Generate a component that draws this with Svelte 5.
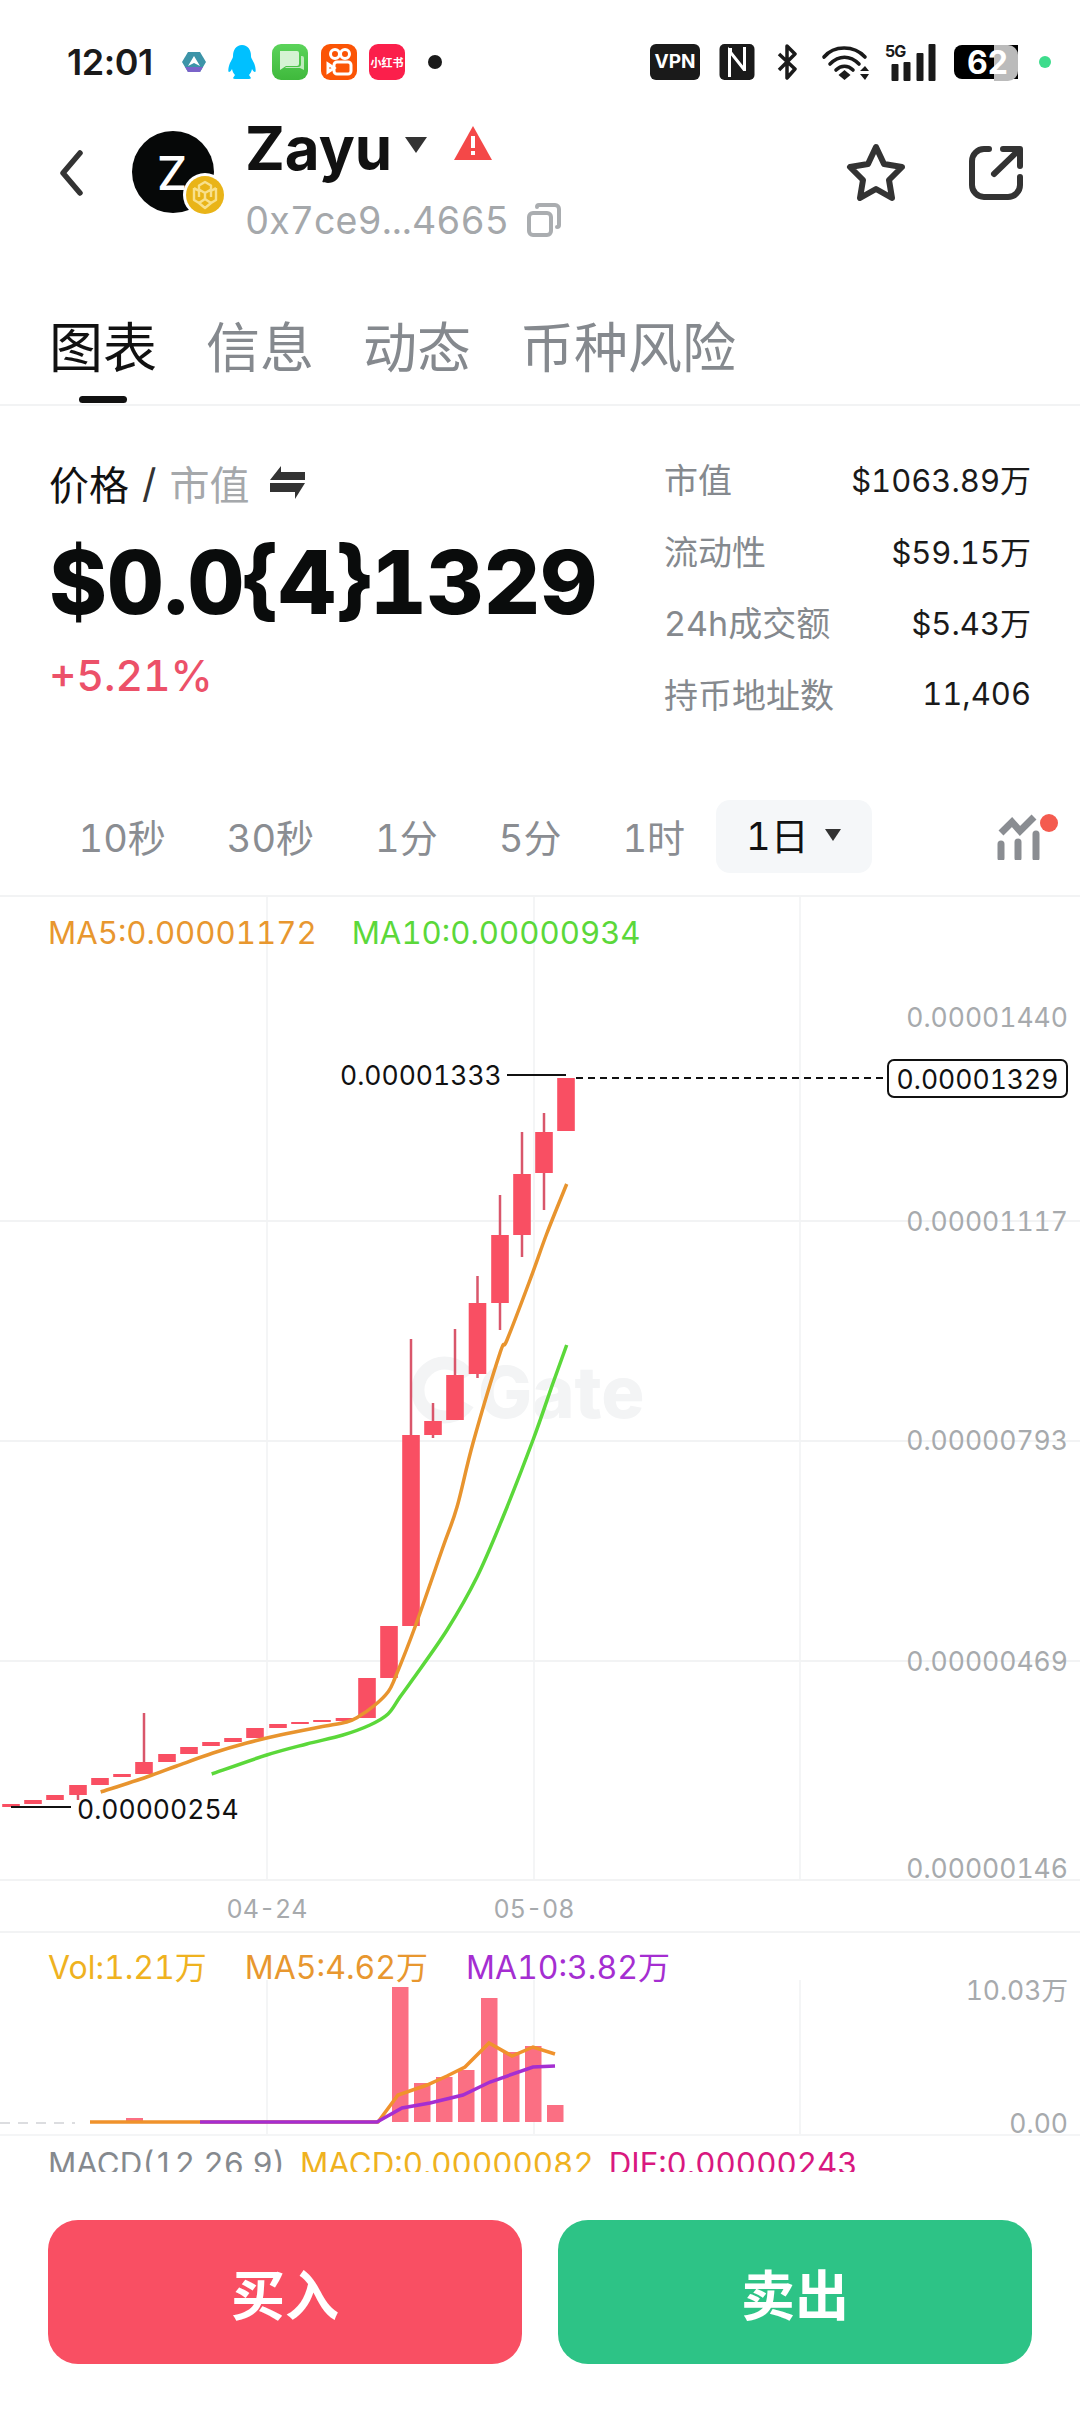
<script>
  const tabs = ['图表', '信息', '动态', '币种风险'];
  const stats = [['市值', '$1063.89万'], ['流动性', '$59.15万'], ['24h成交额', '$5.43万'], ['持币地址数', '11,406']];
  const intervals = ['10秒', '30秒', '1分', '5分', '1时'];
  const grid = [267, 534, 800];
  const hgrid = [1221, 1441, 1661, 1880];
  const axis = [['0.00001440', 1027], ['0.00001117', 1231], ['0.00000793', 1450], ['0.00000469', 1671], ['0.00000146', 1878]];
  // centre x, body top, body bottom, wick top, wick bottom
  const candles = [
    [11, 1804, 1807], [33, 1800, 1804], [55, 1795, 1800], [78, 1785, 1795, 1785, 1800], [100, 1778, 1785],
    [122, 1774, 1777], [144, 1762, 1774, 1713, 1774], [167, 1754, 1762], [189, 1747, 1754], [211, 1742, 1746],
    [233, 1738, 1742], [255, 1728, 1738], [278, 1724, 1728], [300, 1722, 1724], [322, 1720, 1722],
    [344.5, 1718, 1721], [367, 1678, 1718], [389, 1626, 1678], [411, 1435, 1626, 1339, 1435],
    [433, 1421, 1435, 1403, 1438], [455, 1375, 1420, 1329, 1375], [477.5, 1303, 1374, 1276, 1378],
    [500, 1235, 1303, 1195, 1330], [522, 1174, 1235, 1132, 1257], [544, 1132, 1173, 1113, 1210], [566, 1078, 1131]
  ];
  const smooth = (pts) => {
    let d = `M${pts[0][0]} ${pts[0][1]}`;
    for (let i = 0; i < pts.length - 1; i++) {
      const p0 = pts[i - 1] || pts[i], p1 = pts[i], p2 = pts[i + 1], p3 = pts[i + 2] || p2;
      const c1 = [p1[0] + (p2[0] - p0[0]) / 6, p1[1] + (p2[1] - p0[1]) / 6];
      const c2 = [p2[0] - (p3[0] - p1[0]) / 6, p2[1] - (p3[1] - p1[1]) / 6];
      d += `C${c1[0]} ${c1[1]} ${c2[0]} ${c2[1]} ${p2[0]} ${p2[1]}`;
    }
    return d;
  };
  const ma5 = smooth([[100.7,1792],[146.7,1777],[176.7,1766],[213,1753],[246.7,1743],[280,1735],[320,1727],[346.7,1722],[358,1717],[375,1705],[388,1692],[395,1678],[415,1627],[443,1547],[457,1507],[473,1443],[500,1353],[507,1340],[530,1280],[547,1233],[566.7,1184]]);
  const ma10 = smooth([[211.7,1774],[266.7,1755],[306.7,1744],[343,1735],[370,1725],[388,1714],[400,1697],[413,1679],[447,1630],[477,1577],[503,1517],[533,1440],[553,1383],[566.7,1345]]);
  const vols = [[392, 1987], [414, 2083], [436, 2077], [458, 2070], [481, 1998], [503, 2052], [525, 2046], [547, 2105]];
  const vma5 = '90,2122 200,2122 378,2122 398,2095 427,2085 447,2076 465,2067 489,2043 512,2056 533,2047 555,2054';
  const vma10 = '200,2122 377,2122 402,2108 430,2103 463,2095 490,2082 533,2067 555,2066';
</script>

<div class="page">
  <div class="status">
    <span class="time">12:01</span>
    <div class="apps">
      <svg class="ic-hex" viewBox="0 0 24 22"><path d="M6 1h12l6 10-6 10H6L0 11z" fill="#3c94a8"/><path d="M6 21h12l3-5H3z" fill="#7a63c9"/><path d="M12 5l6 10-6-3-6 3z" fill="#fff"/></svg>
      <svg class="ic-qq" viewBox="0 0 30 36"><path d="M15 1c6 0 9 5 9 11 0 2 1 3 3 7 2 5 2 9 1 9s-2-1-3-3c-.5 3-2 5-3 6l2 3c0 1-2 1-9 1s-9 0-9-1l2-3c-1-1-2.500-3-3-6-1 2-2 3-3 3s-1-4 1-9c2-4 3-5 3-7C6 6 9 1 15 1z" fill="#00c0ff"/></svg>
      <div class="tile green"><svg viewBox="0 0 36 36"><path d="M8 7h17a2 2 0 0 1 2 2v11a2 2 0 0 1-2 2h-11l-6 4z" fill="#d5f3d3"/><path d="M29 12h1a2 2 0 0 1 2 2v12l-4-2H13l1-1h12a3 3 0 0 0 3-3z" fill="#bfeabc"/></svg></div>
      <div class="tile orange"><svg viewBox="0 0 36 36" fill="none" stroke="#fff" stroke-width="3"><circle cx="14" cy="10" r="4.500"/><circle cx="24" cy="10" r="4.500"/><rect x="13" y="18" width="17" height="12" rx="3"/><path d="M13 24l-6-4v8z"/></svg></div>
      <div class="tile red"><span>小红书</span></div>
      <span class="dot"></span>
    </div>
    <div class="sys">
      <div class="vpn">VPN</div>
      <svg class="nfc" viewBox="0 0 35 36"><rect width="35" height="36" rx="5" fill="#1a1a1a"/><path d="M10 33V7l15 19" fill="none" stroke="#fff" stroke-width="3"/><path d="M25 3v24" stroke="#fff" stroke-width="3"/><path d="M11 4v4" stroke="#fff" stroke-width="3"/></svg>
      <svg class="bt" viewBox="0 0 21 36" fill="none" stroke="#1a1a1a" stroke-width="3.500" stroke-linejoin="round"><path d="M2 10l16 15-8 9V2l8 8L2 26"/></svg>
      <svg class="wifi" viewBox="0 0 48 36"><path d="M2 13C12 1 32 1 43 13M8 20c9-9 20-9 29 0M14 26c5-5 12-5 17 0" fill="none" stroke="#1a1a1a" stroke-width="3.600" stroke-linecap="round"/><path d="M22.500 26l6 5-6 5-6-5z" fill="#1a1a1a"/><path d="M43 22l4 5h-9zM43 36l4-6h-9z" fill="#1a1a1a"/></svg>
      <div class="sig">
        <span class="fiveg">5G</span>
        <svg viewBox="0 0 50 37"><rect x="5" y="20" width="7" height="17" rx="1" fill="#1a1a1a"/><rect x="17" y="18" width="7" height="19" rx="1" fill="#1a1a1a"/><rect x="30" y="9" width="7" height="28" rx="1" fill="#1a1a1a"/><rect x="42" y="0" width="7" height="37" rx="1" fill="#1a1a1a"/></svg>
      </div>
      <div class="batt"><span class="batt-gray"></span><span class="batt-num">62</span></div>
      <span class="gdot"></span>
    </div>
  </div>

  <header class="head">
    <svg class="back" viewBox="0 0 24 46"><path d="M20 3L3 23l17 20" fill="none" stroke="#333" stroke-width="5.500" stroke-linecap="round" stroke-linejoin="round"/></svg>
    <div class="avatar">
      <span>Z</span>
      <svg class="bnb" viewBox="0 0 44 44"><circle cx="22" cy="22" r="22" fill="#fff"/><circle cx="22" cy="22" r="19" fill="#e9b418"/><g fill="none" stroke="#f8e08c" stroke-width="2.400" stroke-linejoin="round"><path d="M22 9l6 3.500v4L22 20l-6-3.500v-4zM11 15l5 3v6M33 15l-5 3v6M11 15v12l5 3M33 15v12l-5 3M22 20v6M22 35l-6-5 6-4 6 4z"/></g></svg>
    </div>
    <div class="ident">
      <div class="name-row">
        <span class="name">Zayu</span>
        <svg class="caret" viewBox="0 0 22 16"><path d="M0 0h22L11 16z" fill="#333"/></svg>
        <svg class="warn" viewBox="0 0 38 34"><path d="M19 0l19 34H0z" fill="#f44848"/><rect x="17" y="10" width="4" height="12" fill="#fff"/><rect x="17" y="25" width="4" height="4" fill="#fff"/></svg>
      </div>
      <div class="addr-row">
        <span class="addr">0x7ce9...4665</span>
        <svg class="copy" viewBox="0 0 34 34" fill="none" stroke="#aaadb0" stroke-width="4" stroke-linecap="round"><rect x="2" y="10" width="22" height="22" rx="4"/><path d="M10 4a2 2 0 0 1 2-2h16a4 4 0 0 1 4 4v16a2 2 0 0 1-2 2"/></svg>
      </div>
    </div>
    <svg class="star" viewBox="0 0 60 58"><path d="M30 4l8 17 18 3-13 13 3 18-16-9-16 9 3-18L4 24l18-3z" fill="none" stroke="#333" stroke-width="6" stroke-linejoin="round"/></svg>
    <svg class="share" viewBox="0 0 54 54" fill="none" stroke="#333" stroke-width="6" stroke-linecap="round" stroke-linejoin="round"><path d="M20 3h-5A12 12 0 0 0 3 15v24a12 12 0 0 0 12 12h24a12 12 0 0 0 12-12v-8M25 28L50 4M34 3h17v17"/></svg>
  </header>

  <nav class="tabs">
    {#each tabs as t, i}
      <span class="tab" class:on={i === 0}>{t}</span>
    {/each}
  </nav>

  <section class="stats">
    <div class="left">
      <div class="switch">
        <span>价格</span><span class="slash">/</span><span class="muted">市值</span>
        <svg viewBox="0 0 36 34"><path d="M1 14L12 0v6h24v8zM1 17h35L26 33v-7H1z" fill="#333"/></svg>
      </div>
      <div class="price">$0.0{'{'}4{'}'}1329</div>
      <div class="chg">+5.21%</div>
    </div>
    <div class="right">
      {#each stats as [k, v]}
        <div class="stat"><span class="k">{k}</span><span class="v">{v}</span></div>
      {/each}
    </div>
  </section>

  <div class="ranges">
    {#each intervals as r}
      <span class="range">{r}</span>
    {/each}
    <span class="range sel">1日<svg viewBox="0 0 16 12"><path d="M0 0h16L8 12z" fill="#333"/></svg></span>
    <svg class="ind" viewBox="0 0 64 46"><path d="M5 19l11-11 8 9L38 3" fill="none" stroke="#8a8d92" stroke-width="7"/><path d="M5 30v14M22 28v16M40 20v24" stroke="#8a8d92" stroke-width="7" stroke-linecap="round"/><circle cx="53" cy="9" r="9" fill="#f45b4f"/></svg>
  </div>

  <div class="main">
    <div class="legend top"><span class="c-o">MA5:0.00001172</span><span class="c-g">MA10:0.00000934</span></div>
    <svg class="plot" viewBox="0 897 1080 1035">
      {#each grid as x}<line x1={x} x2={x} y1="897" y2="1880" stroke="#f4f5f6" stroke-width="2"/>{/each}
      {#each hgrid as y}<line x1="0" x2="1080" y1={y} y2={y} stroke="#f2f3f4" stroke-width="2"/>{/each}
      <g class="wm">
        <path d="M468 1376a27 27 0 1 0 0 28" fill="none" stroke="#f3f4f5" stroke-width="13"/>
        <text x="478" y="1418" class="wm-t">Gate</text>
      </g>
      {#each axis as [t, y]}<text x="1068" {y} text-anchor="end" class="ax">{t}</text>{/each}
      <text x="267" y="1918" text-anchor="middle" class="ax date">04-24</text>
      <text x="534" y="1918" text-anchor="middle" class="ax date">05-08</text>
      {#each candles as [x, a, b, wt, wb]}
        {#if wt}<line x1={x} x2={x} y1={wt} y2={wb} stroke="#d9566b" stroke-width="2.500"/>{/if}
        <rect x={x - 8.8} y={a} width="17.600" height={b - a} fill="#f94f63"/>
      {/each}
      <path d={ma5} fill="none" stroke="#e8942e" stroke-width="3.500"/>
      <path d={ma10} fill="none" stroke="#5bd83a" stroke-width="3.500"/>
      <line x1="507" x2="566" y1="1075" y2="1075" stroke="#111" stroke-width="2"/>
      <text x="340" y="1085" class="lbl">0.00001333</text>
      <line x1="11" x2="71" y1="1807" y2="1807" stroke="#111" stroke-width="2"/>
      <text x="77" y="1819" class="lbl">0.00000254</text>
      <line x1="576" x2="886" y1="1078" y2="1078" stroke="#111" stroke-width="2" stroke-dasharray="7 5"/>
      <rect x="888" y="1060" width="179" height="37" rx="6" fill="#fff" stroke="#111" stroke-width="2"/>
      <text x="977.500" y="1089" text-anchor="middle" class="lbl">0.00001329</text>
    </svg>
  </div>

  <div class="vol">
    <div class="legend"><span class="c-y">Vol:1.21万</span><span class="c-o">MA5:4.62万</span><span class="c-p">MA10:3.82万</span></div>
    <svg class="plot" viewBox="0 1932 1080 203">
      <line x1="0" x2="1080" y1="1932" y2="1932" stroke="#f2f3f4" stroke-width="2"/>
      {#each grid as x}<line x1={x} x2={x} y1="1980" y2="2135" stroke="#f4f5f6" stroke-width="2"/>{/each}
      <line x1="0" x2="1080" y1="2135" y2="2135" stroke="#f4f5f6" stroke-width="2"/>
      <line x1="0" x2="75" y1="2123" y2="2123" stroke="#dcdde0" stroke-width="2" stroke-dasharray="10 8"/>
      <rect x="126" y="2118" width="17" height="4" fill="#fb6f83"/>
      {#each vols as [x, t]}<rect {x} y={t} width="16.500" height={2122 - t} fill="#fb6f83"/>{/each}
      <polyline points={vma5} fill="none" stroke="#f0922c" stroke-width="3.500"/>
      <polyline points={vma10} fill="none" stroke="#a52ed1" stroke-width="3.500"/>
      <text x="1068" y="2000" text-anchor="end" class="ax">10.03万</text>
      <text x="1068" y="2133" text-anchor="end" class="ax">0.00</text>
    </svg>
  </div>

  <div class="macd"><div class="macd-in"><span class="c-gray">MACD(12,26,9)</span><span class="c-y">MACD:0.00000082</span><span class="c-m">DIF:0.00000243</span></div></div>

  <div class="actions">
    <button class="buy">买入</button>
    <button class="sell">卖出</button>
  </div>
</div>

<style>
  :global(body) { margin: 0; background: #fff; }
  .page { width: 1080px; height: 2412px; overflow: hidden; background: #fff; color: #111; font-family: Inter, "Noto Sans CJK SC", sans-serif; font-variant-numeric: tabular-nums; }

  .status { display: flex; align-items: center; height: 36px; padding: 44px 0 42px 67px; color: #1a1a1a; }
  .time { font-size: 36px; font-weight: 600; width: 115px; letter-spacing: -0.5px; font-variant-numeric: normal; }
  .apps { display: flex; align-items: center; }
  .ic-hex { width: 24px; height: 22px; margin-right: 21px; }
  .ic-qq { width: 30px; height: 36px; margin-right: 15px; }
  .tile { width: 36px; height: 36px; border-radius: 9px; margin-right: 13px; display: flex; align-items: center; justify-content: center; }
  .tile svg { width: 36px; height: 36px; }
  .green { background: linear-gradient(#5bd35a, #3fb93c); }
  .orange { background: #fb5405; margin-right: 12px; }
  .red { background: #fb1f4b; margin-right: 0; }
  .red span { color: #fff; font-size: 11px; font-weight: 700; white-space: nowrap; }
  .dot { width: 14px; height: 14px; border-radius: 50%; background: #1a1a1a; margin-left: 23px; }
  .sys { display: flex; align-items: center; margin-left: auto; height: 36px; }
  .vpn { width: 50px; height: 36px; background: #1a1a1a; color: #fff; border-radius: 6px; font-size: 19px; font-weight: 700; line-height: 36px; text-align: center; margin-right: 19px; }
  .nfc { width: 36px; height: 36px; margin-right: 22px; }
  .bt { width: 21px; height: 36px; margin-right: 23px; }
  .wifi { width: 50px; height: 36px; margin-right: 15px; }
  .sig { position: relative; width: 51px; height: 37px; margin-right: 17px; }
  .sig svg { width: 51px; height: 37px; display: block; }
  .fiveg { position: absolute; left: -1px; top: -3px; font-size: 16px; font-weight: 700; letter-spacing: -1px; }
  .batt { position: relative; width: 64px; height: 34px; background: #000; border-radius: 8px 0 0 8px; display: flex; align-items: center; margin-right: 21px; }
  .batt-gray { position: absolute; left: 40px; top: 0; width: 24px; height: 36px; background: #bbb; border-radius: 0 10px 10px 0; }
  .batt-num { position: relative; margin-left: 13px; font-size: 32px; font-weight: 700; color: #fff; font-variant-numeric: normal; }
  .gdot { width: 12px; height: 12px; border-radius: 50%; background: #3ddc8c; margin-right: 29px; }

  .head { display: flex; align-items: flex-start; height: 112px; padding-left: 60px; padding-right: 57px; }
  .back { width: 24px; height: 46px; margin-top: 28px; }
  .avatar { position: relative; width: 82px; height: 82px; border-radius: 50%; background: #060808; margin: 9px 31px 0 48px; color: #fff; display: flex; align-items: center; justify-content: center; flex: none; }
  .avatar span { font-size: 47px; font-weight: 500; margin-left: -2px; }
  .bnb { position: absolute; right: -13px; bottom: -4px; width: 44px; height: 44px; }
  .ident { flex: 1; margin-top: -8px; }
  .name-row { display: flex; align-items: center; height: 68px; }
  .name { font-size: 60px; font-weight: 650; line-height: 68px; }
  .caret { width: 22px; height: 16px; margin-left: 13px; margin-top: -6px; }
  .warn { width: 38px; height: 34px; margin-left: 27px; margin-top: -10px; }
  .addr-row { display: flex; align-items: center; height: 44px; margin-top: 16px; }
  .addr { font-size: 37.500px; color: #a5a8ab; }
  .copy { width: 34px; height: 34px; margin-left: 18px; }
  .star { width: 60px; height: 58px; margin-top: 21px; margin-right: 63px; }
  .share { width: 54px; height: 54px; margin-top: 24px; }

  .tabs { display: flex; gap: 49px; height: 89px; padding: 81px 0 0 49px; border-bottom: 2px solid #f2f3f4; }
  .tab { position: relative; font-size: 54px; line-height: 68px; color: #85898e; height: 68px; }
  .tab.on { color: #111; }
  .tab.on::after { content: ""; position: absolute; left: 30px; top: 81px; width: 48px; height: 7px; border-radius: 4px; background: #111; }

  .stats { display: flex; justify-content: space-between; height: 392px; padding: 0 49px; }
  .left { padding-top: 49px; }
  .switch { display: flex; align-items: center; font-size: 40px; height: 56px; }
  .slash { color: #333; margin: 0 13px; }
  .muted { color: #a5a8ab; }
  .switch svg { width: 36px; height: 34px; margin-left: 20px; }
  .price { font-size: 88px; font-weight: 800; line-height: 100px; margin-top: 21px; white-space: nowrap; color: #0a0c0c; }
  .chg { font-size: 42.500px; font-weight: 500; color: #ec5169; margin-top: 16px; line-height: 56px; }
  .right { width: 367px; padding-top: 37px; }
  .stat { display: flex; justify-content: space-between; align-items: center; height: 71.500px; font-size: 31px; }
  .k { color: #85898e; font-size: 34px; }
  .v { color: #1a1a1a; }

  .ranges { position: relative; display: flex; align-items: flex-start; height: 95px; padding: 2px 0 0 48px; border-bottom: 2px solid #f2f3f4; }
  .range { font-size: 38px; color: #8a8d92; padding: 0 30.500px; line-height: 77px; height: 73px; white-space: nowrap; }
  .sel { display: flex; align-items: center; color: #111; background: #f5f7f9; border-radius: 14px; padding-right: 31px; }
  .sel svg { width: 16px; height: 12px; margin-left: 16px; margin-top: -4px; }
  .ind { position: absolute; left: 996px; top: 16px; width: 64px; height: 46px; }

  .main { position: relative; height: 1035px; }
  .plot { display: block; width: 1080px; height: 100%; overflow: visible; }
  .legend { position: absolute; left: 48px; display: flex; font-size: 32px; white-space: nowrap; }
  .legend.top { top: 17px; gap: 35px; font-size: 31.200px; }
  .c-o { color: #e8972f; } .c-g { color: #5bd83a; } .c-y { color: #efb21f; } .c-p { color: #a52ed1; } .c-m { color: #d9187f; } .c-gray { color: #85898e; }
  .ax { font-size: 26.500px; fill: #a7aaad; font-family: Inter, "Noto Sans CJK SC", sans-serif; font-variant-numeric: tabular-nums; }
  .date { font-size: 25px; }
  .lbl { font-size: 26.500px; fill: #111; font-family: Inter, sans-serif; font-variant-numeric: tabular-nums; }
  .wm-t { font-size: 72px; font-weight: 800; fill: #f3f4f5; font-family: Inter, sans-serif; }

  .vol { position: relative; height: 203px; }
  .vol .legend { top: 10px; gap: 38px; }
  .macd { height: 85px; overflow: hidden; }
  .macd-in { height: 37px; overflow: hidden; display: flex; gap: 15px; padding: 9px 0 0 48px; box-sizing: border-box; font-size: 31.300px; line-height: 40px; white-space: nowrap; }

  .actions { display: flex; gap: 36px; padding: 0 48px; }
  button { flex: 1; height: 144px; border: 0; border-radius: 30px; color: #fff; font-family: inherit; font-size: 54px; font-weight: 700; }
  .buy { background: #f94f63; }
  .sell { background: #2dc386; }
</style>
